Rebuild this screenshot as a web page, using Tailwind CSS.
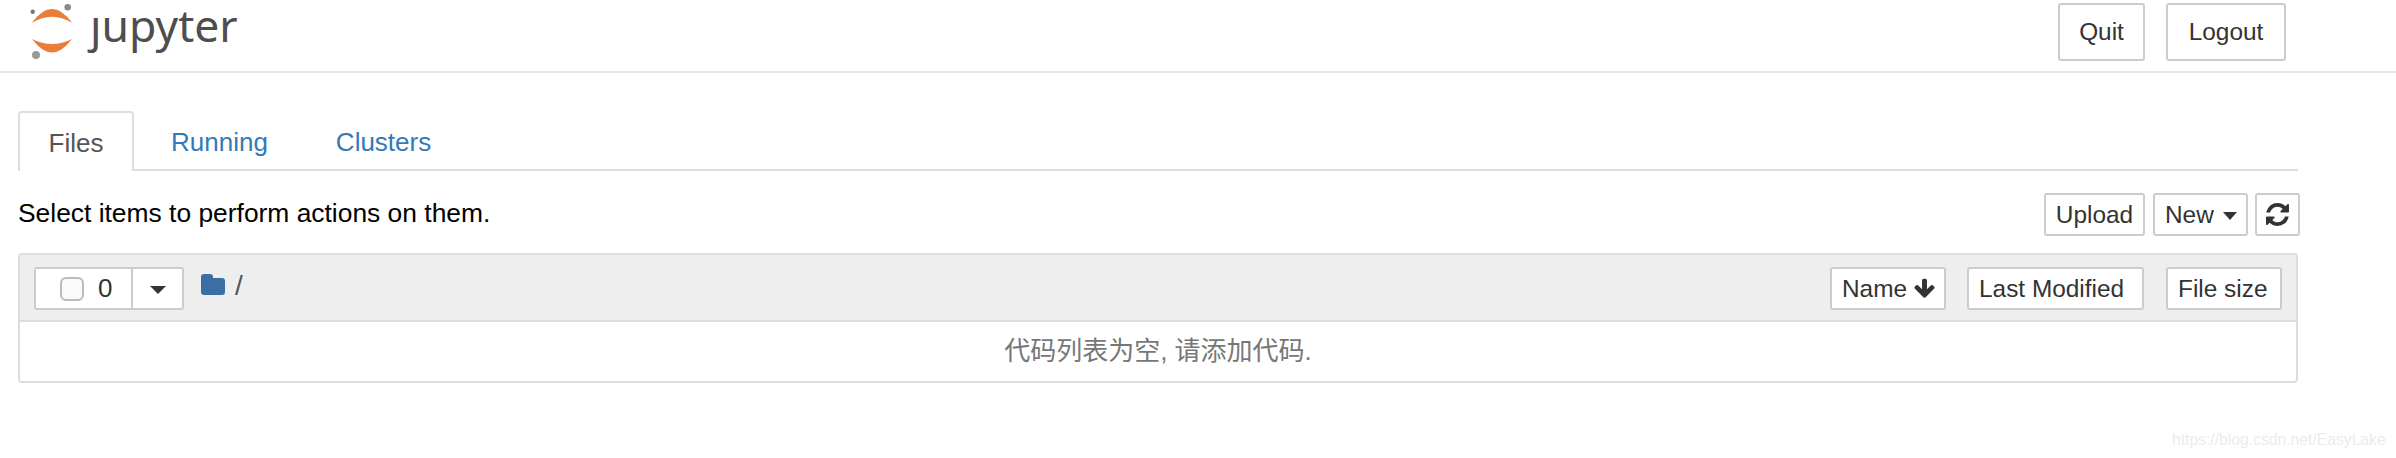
<!DOCTYPE html>
<html lang="en">
<head>
<meta charset="utf-8">
<title>Jupyter</title>
<script src="https://cdn.jsdelivr.net/npm/@tailwindcss/browser@4"></script>
</head>
<body class="relative bg-white h-[458px] overflow-hidden font-['Liberation_Sans','Noto_Sans_CJK_SC',sans-serif] text-[26px] text-[#333]">
  <!-- header -->
  <header class="flex justify-between h-[73px] border-b-2 border-[#e7e7e7] pl-[28px] pr-[110px]">
    <a class="flex items-start" href="#">
      <svg class="w-[50px] h-[60px]" viewBox="0 0 50 60">
        <path fill="#e87e3a" d="M4 22.7Q24-4.500 44 22.700Q24 10.700 4 22.700z"/>
        <path fill="#e87e3a" d="M4 39Q24 66 44 39Q24 49 4 39z"/>
        <circle cx="39.700" cy="7.300" r="3.300" fill="#8a8a8a"/>
        <circle cx="4.700" cy="11.700" r="2.200" fill="#777"/>
        <circle cx="8" cy="55" r="4" fill="#999"/>
      </svg>
      <span class="ml-[12px] font-['Noto_Sans'] text-[44.500px] leading-[50px] text-[#4e4e4e]">ȷupyter</span>
    </a>
    <div class="flex gap-[21px] pt-[3px] text-[24.4px]">
      <button class="w-[87px] h-[58px] border-2 border-[#ccc] rounded-[3px]">Quit</button>
      <button class="w-[120px] h-[58px] border-2 border-[#ccc] rounded-[3px]">Logout</button>
    </div>
  </header>

  <main class="w-[2282px] ml-[18px]">
    <!-- tabs -->
    <nav class="flex w-[2280px] h-[60px] mt-[38px] border-b-2 border-[#ddd]">
      <a class="flex justify-center items-center w-[116px] h-[60px] pt-[2px] bg-white border-2 border-b-0 border-[#ddd] rounded-t-[4px] text-[#555]" href="#">Files</a>
      <a class="flex items-center h-[60px] pt-[2px] ml-[37px] text-[#337ab7]" href="#">Running</a>
      <a class="flex items-center h-[60px] pt-[2px] ml-[68px] text-[#337ab7]" href="#">Clusters</a>
    </nav>

    <!-- toolbar -->
    <div class="flex justify-between h-[82px] pt-[22px]">
      <p class="text-black text-[26.4px] h-[38px] leading-[40px]">Select items to perform actions on them.</p>
      <div class="flex h-[43px] text-[24.4px]">
        <button class="w-[101px] pt-[2px] border-2 border-[#ccc] rounded-[3px]">Upload</button>
        <button class="flex items-center gap-[9px] w-[95px] ml-[8px] pl-[10px] pt-[2px] border-2 border-[#ccc] rounded-[3px]">New
          <span class="border-x-[7.5px] border-x-transparent border-t-[8px] border-t-[#333]"></span>
        </button>
        <button class="flex items-center justify-center w-[45px] ml-[7px] border-2 border-[#ccc] rounded-[3px]">
          <svg class="w-[23px] h-[23px]" viewBox="0 0 1536 1536" fill="#333"><path d="M1511 928q0 5-1 7-64 268-268 434.500t-478 166.500q-146 0-282.500-55t-243.500-157l-129 129q-19 19-45 19t-45-19-19-45v-448q0-26 19-45t45-19h448q26 0 45 19t19 45-19 45l-137 137q71 66 161 102t187 36q134 0 250-65t186-179q11-17 53-117 8-23 30-23h192q13 0 22.500 9.500t9.500 22.500zm25-800v448q0 26-19 45t-45 19h-448q-26 0-45-19t-19-45 19-45l138-138q-148-137-349-137-134 0-250 65t-186 179q-11 17-53 117-8 23-30 23h-199q-13 0-22.500-9.500t-9.500-22.500v-7q65-268 270-434.500t480-166.500q146 0 284 55.500t245 156.500l130-129q19-19 45-19t45 19 19 45z"/></svg>
        </button>
      </div>
    </div>

    <!-- file list -->
    <section class="w-[2280px] h-[130px] border-2 border-[#ddd] rounded-[4px]">
      <div class="flex items-start justify-between h-[67px] bg-[#eee] border-b-2 border-[#ddd] pt-[12px] pl-[14px] pr-[14px]">
        <div class="flex items-start">
          <div class="flex w-[150px] h-[43px] bg-white border-2 border-[#ccc] rounded-[3px]">
            <div class="flex items-center w-[97px] pl-[24px] gap-[14px] border-r-2 border-[#ccc]">
              <span class="w-[24px] h-[24px] rounded-[6px] border-2 border-[#bbb] bg-[#fafafa]"></span>
              <span>0</span>
            </div>
            <div class="flex flex-1 items-center justify-center">
              <span class="mt-[3px] border-x-[8px] border-x-transparent border-t-[8px] border-t-[#333]"></span>
            </div>
          </div>
          <svg class="ml-[17px] mt-[7px] w-[24px] h-[21px]" viewBox="0 0 24 21" fill="#3b6ea5"><path d="M3 0h6a3 3 0 0 1 3 3v1h9a3 3 0 0 1 3 3v11a3 3 0 0 1-3 3H3a3 3 0 0 1-3-3V3a3 3 0 0 1 3-3z"/></svg>
          <span class="ml-[10px] text-[28px] leading-[38px] text-[#555]">/</span>
        </div>
        <div class="flex h-[43px] text-[24.4px]">
          <button class="flex items-center gap-[6px] w-[116px] pl-[10px] pt-[2px] bg-white border-2 border-[#ccc] rounded-[3px]">Name
            <svg class="w-[23px] h-[23px] mt-[-3px]" viewBox="0 0 1792 1792" fill="#333"><path d="M1675 832q0 53-37 90l-651 652q-39 37-91 37-53 0-90-37l-651-652q-38-36-38-90 0-53 38-91l74-75q39-37 91-37 53 0 90 37l294 294v-704q0-52 38-90t90-38h128q52 0 90 38t38 90v704l294-294q37-37 90-37 52 0 91 37l75 75q37 39 37 91z"/></svg>
          </button>
          <button class="w-[177px] ml-[21px] pl-[10px] pt-[2px] text-left bg-white border-2 border-[#ccc] rounded-[3px]">Last Modified</button>
          <button class="w-[116px] ml-[22px] pl-[10px] pt-[2px] text-left bg-white border-2 border-[#ccc] rounded-[3px]">File size</button>
        </div>
      </div>
      <p class="h-[59px] leading-[59px] text-center text-[#777]">代码列表为空, 请添加代码.</p>
    </section>
  </main>

  <!-- csdn watermark -->
  <span class="absolute left-[2172px] top-[428px] text-[15.700px] leading-[24px] text-[#ececec]">https://blog.csdn.net/EasyLake</span>
</body>
</html>
